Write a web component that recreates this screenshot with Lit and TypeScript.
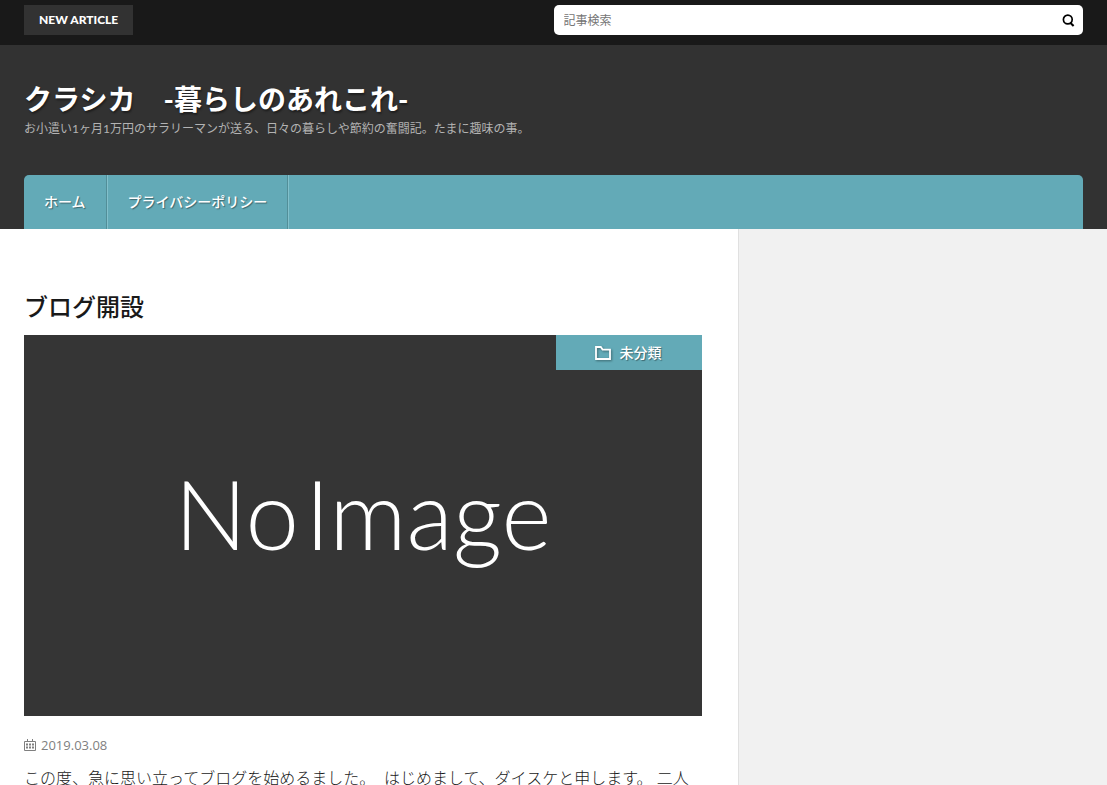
import { LitElement, html, css } from "lit";
import { customElement } from "lit/decorators.js";

const navItems = ["ホーム", "プライバシーポリシー"];

@customElement("site-header")
class SiteHeader extends LitElement {
  static styles = css`
    :host {
      display: block;
      background: #323232;
      color: #fff;
    }
    .topbar {
      display: grid;
      grid-template-columns: 1fr 1fr;
      align-items: center;
      padding: 5px 24px 10px;
      background: #191919;
    }
    .label {
      justify-self: start;
      padding: 0 15px;
      background: #323232;
      font-size: 12px;
      font-weight: 900;
      line-height: 30px;
    }
    .search {
      display: flex;
      height: 30px;
      border-radius: 5px;
      background: #fff;
      overflow: hidden;
    }
    .field {
      flex: 1;
      min-width: 0;
      padding: 0 10px;
      border: 0;
      background: none;
      font-family: inherit;
      font-size: 12px;
    }
    .field::placeholder {
      color: #757575;
    }
    .submit {
      display: grid;
      place-items: center;
      width: 30px;
      padding: 0;
      border: 0;
      background: none;
      color: #000;
    }
    .brand {
      padding: 36px 24px;
    }
    .title {
      margin: 0;
      font-size: 28px;
      font-weight: 700;
      line-height: 36px;
      text-shadow: 1px 2px 2px rgba(0, 0, 0, 0.4);
    }
    .title a {
      color: inherit;
      text-decoration: none;
    }
    .tagline {
      margin: 0;
      padding-top: 1px;
      color: #b3b3b3;
      font-size: 12px;
      line-height: 21px;
    }
    .nav {
      display: flex;
      margin: 0 24px;
      border-radius: 5px 5px 0 0;
      background: #63aab7;
    }
    .nav a {
      padding: 0 20px;
      border-right: 1px solid #528e98;
      box-shadow: 1px 0 #82c0cb;
      color: #fff;
      font-size: 14px;
      font-weight: 500;
      line-height: 54px;
      text-decoration: none;
      text-shadow: 1px 1px 1px rgba(0, 0, 0, 0.4);
    }
    .nav a + a {
      margin-left: 1px;
    }
  `;

  render() {
    return html`
      <div class="topbar">
        <span class="label">NEW ARTICLE</span>
        <form class="search" role="search" @submit=${(e: Event) => e.preventDefault()}>
          <input class="field" type="text" placeholder="記事検索" aria-label="記事検索" />
          <button class="submit" type="submit" aria-label="検索">
            <svg width="14" height="14" viewBox="0 0 14 14" fill="none" stroke="currentColor">
              <circle cx="6.800" cy="6.500" r="4.400" stroke-width="1.7" />
              <path d="M9 9.500 12.600 13" stroke-width="2.1" />
            </svg>
          </button>
        </form>
      </div>
      <div class="brand">
        <h1 class="title"><a href="#">クラシカ　-暮らしのあれこれ-</a></h1>
        <p class="tagline">お小遣い1ヶ月1万円のサラリーマンが送る、日々の暮らしや節約の奮闘記。たまに趣味の事。</p>
      </div>
      <nav class="nav">${navItems.map((item) => html`<a href="#">${item}</a>`)}</nav>
    `;
  }
}

@customElement("article-card")
class ArticleCard extends LitElement {
  static styles = css`
    :host {
      display: block;
      color: #191919;
    }
    .heading {
      margin: 0 0 10px;
      font-size: 24px;
      font-weight: 500;
      line-height: 36px;
    }
    .heading a {
      color: inherit;
      text-decoration: none;
    }
    .eyecatch {
      position: relative;
      display: grid;
      place-items: center;
      aspect-ratio: 16 / 9;
      background: #353535;
      color: #fff;
    }
    .placeholder {
      display: flex;
      gap: 6px;
      padding-bottom: 26px;
      font-family: Lato, sans-serif;
      font-size: 96px;
      font-weight: 300;
      line-height: 120px;
    }
    .category {
      position: absolute;
      top: 0;
      right: 0;
      display: flex;
      align-items: center;
      justify-content: center;
      gap: 9px;
      box-sizing: border-box;
      min-width: 146px;
      padding-right: 2px;
      background: #63aab7;
      color: #fff;
      font-size: 14px;
      font-weight: 500;
      line-height: 35px;
      text-decoration: none;
      text-shadow: 1px 1px 1px rgba(0, 0, 0, 0.4);
    }
    .category svg {
      filter: drop-shadow(1px 1px 1px rgba(0, 0, 0, 0.4));
    }
    .date {
      display: flex;
      align-items: center;
      gap: 5px;
      margin-top: 19px;
      color: #7f7f7f;
      font-family: "Open Sans", sans-serif;
      font-size: 13px;
      line-height: 20px;
    }
    .excerpt {
      margin: 9px 0 0;
      font-size: 16px;
      font-weight: 300;
      line-height: 28px;
    }
  `;

  render() {
    return html`
      <h2 class="heading"><a href="#">ブログ開設</a></h2>
      <div class="eyecatch">
        <div class="placeholder"><span>No</span> <span>Image</span></div>
        <a class="category" href="#">
          <svg width="16" height="14" viewBox="0 0 16 14" fill="none" stroke="currentColor" stroke-width="1.8">
            <path d="M1 1h4.800l1.800 2.600H15V13H1z" />
          </svg>
          <span>未分類</span>
        </a>
      </div>
      <div class="date">
        <svg width="12" height="12" viewBox="0 0 12 12" fill="none" stroke="currentColor">
          <path d="M.5 2.500h11v9H.5zM3.500 0v3M8.500 0v3" />
          <path d="M2 5.500h8M2 8.500h8" stroke-width="2" stroke-dasharray="2 1" />
        </svg>
        <time datetime="2019-03-08">2019.03.08</time>
      </div>
      <p class="excerpt">この度、急に思い立ってブログを始めるました。&nbsp; はじめまして、ダイスケと申します。 二人</p>
    `;
  }
}

@customElement("app-root")
class AppRoot extends LitElement {
  static styles = css`
    :host {
      display: flex;
      flex-direction: column;
      min-height: 100vh;
      background: #fff;
      font-family: Lato, "Noto Sans CJK JP", sans-serif;
    }
    .content {
      flex: 1;
      display: grid;
      grid-template-columns: 2fr 1fr;
    }
    .main {
      min-width: 0;
      padding: 60px 36px 0 24px;
    }
    .sidebar {
      border-left: 1px solid #e0e0e0;
      background: #f1f1f1;
    }
  `;

  render() {
    return html`
      <site-header></site-header>
      <div class="content">
        <main class="main"><article-card></article-card></main>
        <aside class="sidebar"></aside>
      </div>
    `;
  }
}
